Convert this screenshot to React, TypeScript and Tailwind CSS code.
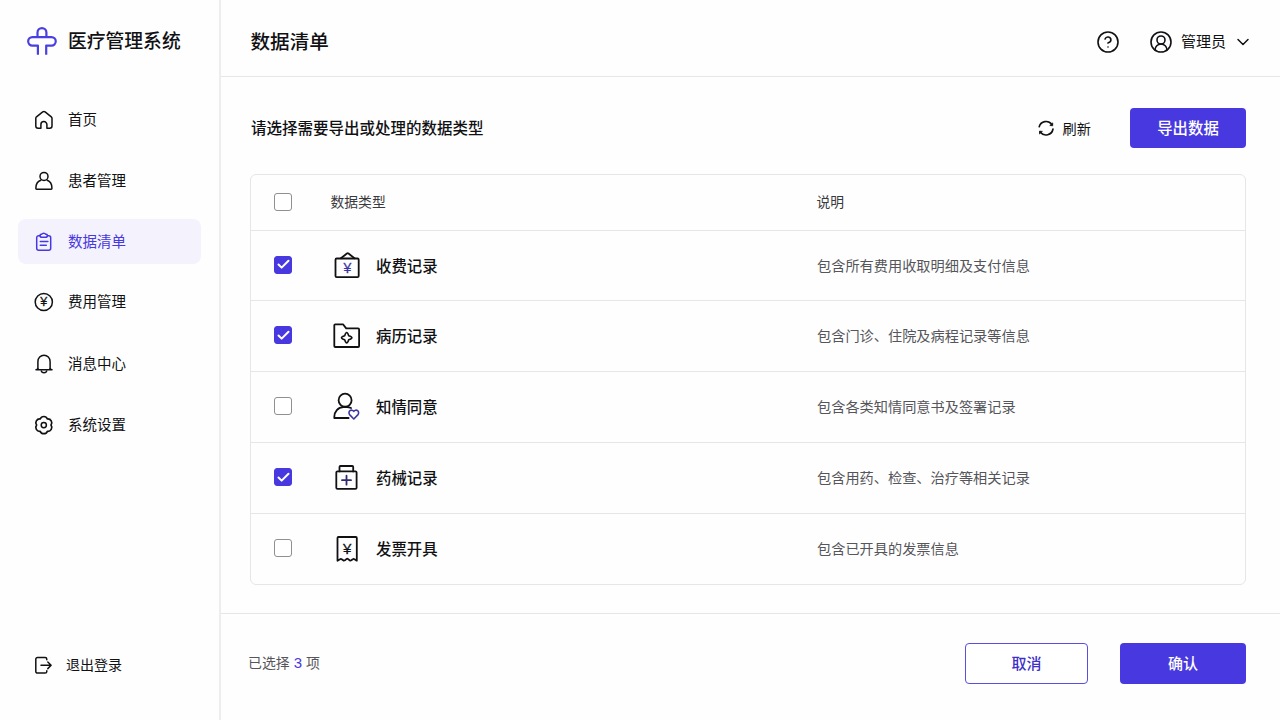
import { useState } from 'react';
import type { ReactNode } from 'react';
import { Check, ChevronDown, CircleUserRound, HelpCircle } from 'lucide-react';
import clsx from 'clsx';

const ACCENT = '#3b35a5';

function Yen({ x, y, size, fill = 'currentColor' }: { x: number; y: number; size: number; fill?: string }) {
  return (
    <text
      x={x}
      y={y}
      fontSize={size}
      fill={fill}
      stroke={fill}
      strokeWidth="0.3"
      textAnchor="middle"
      className="font-['Liberation_Sans',sans-serif]"
    >
      ¥
    </text>
  );
}

function NavIcon({ children }: { children: ReactNode }) {
  return (
    <svg
      className="w-5 h-5 shrink-0"
      viewBox="0 0 20 20"
      fill="none"
      stroke="currentColor"
      strokeWidth="1.5"
      strokeLinecap="round"
      strokeLinejoin="round"
    >
      {children}
    </svg>
  );
}

function RowIcon({ children }: { children: ReactNode }) {
  return (
    <svg
      className="w-8 h-8 shrink-0"
      viewBox="0 0 32 32"
      fill="none"
      stroke="currentColor"
      strokeWidth="1.8"
      strokeLinecap="round"
      strokeLinejoin="round"
    >
      {children}
    </svg>
  );
}

function Logo() {
  return (
    <svg className="w-[30px] h-[30px]" viewBox="0 0 30 30" fill="none" stroke="#4a3fe0" strokeWidth="2.2" strokeLinejoin="round">
      <path d="M10.5 12V7.5a4.4 4.4 0 0 1 8.9 0V12" />
      <path d="M10.9 29.7v-9.1H5.4a4.2 4.2 0 0 1 0-8.5h19.1a4.2 4.2 0 0 1 0 8.5h-5.3v9.1" />
    </svg>
  );
}

const navItems = [
  {
    label: '首页',
    icon: (
      <NavIcon>
        <path d="M6.9 18.2H4A2.2 2.2 0 0 1 1.8 16V8.3c0-.6.3-1.1.7-1.5l6.2-4.9a1.9 1.9 0 0 1 2.4 0l6.2 4.9c.5.4.7.9.7 1.5V16a2.2 2.2 0 0 1-2.2 2.2h-2.9v-3.6a3 3 0 0 0-6 0z" />
      </NavIcon>
    ),
  },
  {
    label: '患者管理',
    icon: (
      <NavIcon>
        <circle cx="10" cy="5.4" r="4" />
        <path d="M6.8 9.2c-2.9 1.1-4.9 4-4.9 7.6v.8c0 .4.3.7.7.7h14.6c.4 0 .7-.3.7-.7v-.8c0-3.6-1.9-6.5-4.7-7.6" />
      </NavIcon>
    ),
  },
  {
    label: '数据清单',
    icon: (
      <NavIcon>
        <path d="M6 3.7H4.7a2 2 0 0 0-2 2v10.6a2 2 0 0 0 2 2h10a2 2 0 0 0 2-2V5.7a2 2 0 0 0-2-2h-1.3" />
        <path d="M6 3.4c0-.7.4-1.1 1.1-1.1h.6c.3-.7 1.1-1.1 2-1.1s1.7.4 2 1.1h.6c.7 0 1.1.4 1.1 1.1 0 1.2-.8 1.9-2 1.9H8c-1.2 0-2-.7-2-1.9z" />
        <path d="M6.3 9.5h7.6M6.3 13.3h6" />
      </NavIcon>
    ),
  },
  {
    label: '费用管理',
    icon: (
      <NavIcon>
        <circle cx="9.8" cy="10" r="8.6" />
        <Yen x={9.8} y={14.2} size={12.5} />
      </NavIcon>
    ),
  },
  {
    label: '消息中心',
    icon: (
      <NavIcon>
        <path d="M3.9 15.3V7.5a6.1 6.3 0 0 1 12.2 0v7.8" />
        <path d="M2 15.7c.9-.1 1.6-.5 1.9-1.1M18 15.7c-.9-.1-1.6-.5-1.9-1.1M2 15.7h16" />
        <path d="M7.3 17c.3 1 1.4 1.7 2.7 1.7s2.4-.7 2.7-1.7" />
      </NavIcon>
    ),
  },
  {
    label: '系统设置',
    icon: (
      <NavIcon>
        <path
          strokeWidth="1.7"
          d="M17 10.1A3.9 3.9 0 0 1 13.4 16.3A3.9 3.9 0 0 1 6.2 16.3A3.9 3.9 0 0 1 2.6 10.1A3.9 3.9 0 0 1 6.2 3.9A3.9 3.9 0 0 1 13.4 3.9A3.9 3.9 0 0 1 17 10.1z"
        />
        <circle cx="9.8" cy="10.1" r="2.6" />
      </NavIcon>
    ),
  },
];

const records = [
  {
    name: '收费记录',
    desc: '包含所有费用收取明细及支付信息',
    icon: (
      <RowIcon>
        <rect x="4.5" y="8.5" width="23.2" height="18.6" rx="1.2" />
        <path d="M9.9 8.3l6-4.8c.5-.4 1.1-.4 1.6 0l6 4.8" />
        <Yen x={16.5} y={22.6} size={14} fill={ACCENT} />
      </RowIcon>
    ),
  },
  {
    name: '病历记录',
    desc: '包含门诊、住院及病程记录等信息',
    icon: (
      <RowIcon>
        <path d="M3.3 5.3c0-.6.4-1 1-1H12l3.2 4.1h11.9c.6 0 1 .4 1 1V26c0 .6-.4 1-1 1H4.3c-.6 0-1-.4-1-1z" />
        <path
          strokeWidth="1.6"
          d="M13.7 15.7q1-3.2 2-3.2t2 3.2q3.2 1 3.2 2t-3.2 2q-1 3.2-2 3.2t-2-3.2q-3.2-1-3.2-2t3.2-2z"
        />
      </RowIcon>
    ),
  },
  {
    name: '知情同意',
    desc: '包含各类知情同意书及签署记录',
    icon: (
      <RowIcon>
        <circle cx="14.1" cy="9.2" r="6.5" />
        <path d="M17.6 27H3.3v-1.2c0-5 3.7-9.7 9-9.7h3.7c1.600 0 2.900.3 4 .9" />
        <path
          stroke={ACCENT}
          strokeWidth="1.6"
          d="M22.800 28l-4-4.100c-1.200-1.300-1-3.300.2-4.200 1.200-.9 2.800-.7 3.800.7 1-1.400 2.600-1.600 3.800-.7 1.200.9 1.400 2.900.2 4.200z"
        />
      </RowIcon>
    ),
  },
  {
    name: '药械记录',
    desc: '包含用药、检查、治疗等相关记录',
    icon: (
      <RowIcon>
        <rect x="5.3" y="9.4" width="20.3" height="17.5" rx="1.2" />
        <path d="M8.5 9.4V5c0-.6.4-1 1-1h11.7c.6 0 1 .4 1 1v4.4" />
        <path stroke="#2f2c72" d="M15.5 13.7v9M11 18.2h9" />
      </RowIcon>
    ),
  },
  {
    name: '发票开具',
    desc: '包含已开具的发票信息',
    icon: (
      <RowIcon>
        <path d="M6.5 27.7V4.9c0-.5.4-.9.9-.9h17.5c.5 0 .9.4.9.9v22.8l-2.3-1.5c-.6-.4-1.2-.4-1.7 0l-1.5 1.1c-.6.4-1.2.4-1.7 0l-1.5-1.2c-.6-.4-1.2-.4-1.7 0l-1.5 1.2c-.6.4-1.2.4-1.7 0l-1.5-1.1c-.6-.4-1.2-.4-1.7 0z" />
        <Yen x={16.2} y={20.9} size={15} />
      </RowIcon>
    ),
  },
];

function Checkbox({ checked, onClick }: { checked: boolean; onClick: () => void }) {
  return (
    <button
      role="checkbox"
      aria-checked={checked}
      onClick={onClick}
      className={clsx(
        'flex items-center justify-center w-[18px] h-[18px] shrink-0 rounded-[3px] border mb-0.5',
        checked ? 'bg-[#4838df] border-[#4838df]' : 'bg-white border-[#8f8f94]'
      )}
    >
      {checked && <Check className="w-[15px] h-[15px] shrink-0 text-white" strokeWidth={3.2} />}
    </button>
  );
}

export default function App() {
  const [active, setActive] = useState('数据清单');
  const [selected, setSelected] = useState(['收费记录', '病历记录', '药械记录']);

  const toggle = (name: string) =>
    setSelected((prev) => (prev.includes(name) ? prev.filter((n) => n !== name) : [...prev, name]));
  const allSelected = selected.length === records.length;

  return (
    <div className="flex w-full h-screen overflow-hidden bg-[#fefefe] text-[#111114] font-['Noto_Sans_CJK_SC',sans-serif]">
      {/* Sidebar */}
      <aside className="flex flex-col w-[221px] shrink-0 border-r-2 border-[#ededef]">
        <div className="flex items-center gap-[11px] pl-[27px] pt-[25px]">
          <Logo />
          <span className="text-[18.8px] leading-[30px] font-medium">医疗管理系统</span>
        </div>

        <nav className="flex flex-col gap-4 px-[18px] mt-[42px]">
          {navItems.map((item) => (
            <button
              key={item.label}
              onClick={() => setActive(item.label)}
              className={clsx(
                'flex items-center gap-3.5 h-[45px] pl-4 rounded-lg text-[14.5px] nth-4:-mt-px nth-4:mb-px',
                active === item.label && 'bg-[#f4f2fd] text-[#4838df]'
              )}
            >
              {item.icon}
              <span className="mb-0.5">{item.label}</span>
            </button>
          ))}
        </nav>

        <button className="flex items-center gap-3 mt-auto mb-[45px] pl-[34px] text-[14px]">
          <NavIcon>
            <path d="M12.8 4.8v-.6a1.7 1.7 0 0 0-1.7-1.7H3.5a1.7 1.7 0 0 0-1.7 1.7v12.2a1.7 1.7 0 0 0 1.7 1.7h7.6a1.7 1.7 0 0 0 1.7-1.7v-.6" />
            <path d="M7 10.3h10M13.8 7l3.3 3.3-3.3 3.3" />
          </NavIcon>
          <span>退出登录</span>
        </button>
      </aside>

      <div className="flex flex-col flex-1 min-w-0">
        {/* Header */}
        <header className="flex items-center justify-between h-[77px] pt-3 pb-[5px] pl-[29.5px] pr-[27px] border-b border-[#e6e6e8]">
          <h1 className="text-[19.6px] leading-[30px] font-medium mb-px">数据清单</h1>
          <div className="flex items-center">
            <HelpCircle className="w-6 h-6" strokeWidth={1.6} />
            <button className="flex items-center ml-[29px] text-[15px] leading-6">
              <CircleUserRound className="w-6 h-6" strokeWidth={1.6} />
              <span className="ml-2 mb-px">管理员</span>
              <ChevronDown className="w-5 h-5 ml-[7px]" strokeWidth={1.8} />
            </button>
          </div>
        </header>

        {/* Content */}
        <main className="flex-1 pl-[29px] pr-[34px] pt-[31px]">
          <div className="flex items-center justify-between h-10">
            <p className="pl-px text-[15.5px] font-medium">请选择需要导出或处理的数据类型</p>
            <div className="flex items-center">
              <button className="flex items-center gap-2 pt-px text-[14.2px]">
                <svg
                  className="w-[18px] h-[18px]"
                  viewBox="0 0 18 18"
                  fill="none"
                  stroke="currentColor"
                  strokeWidth="1.6"
                  strokeLinecap="round"
                  strokeLinejoin="round"
                >
                  <path d="M2.2 7.7A7.1 7.1 0 0 1 14.8 5.500M16 10A7.1 7.1 0 0 1 3.4 13.200" />
                  <path fill="currentColor" strokeWidth="0.8" d="M15.7 4.300v2.500l-2.500-.3zM2.500 14.600v-2.500l2.500.3z" />
                </svg>
                <span>刷新</span>
              </button>
              <button className="w-[116px] h-10 ml-[39px] rounded-[4px] bg-[#4838df] text-white text-[15.4px] font-medium">
                导出数据
              </button>
            </div>
          </div>

          <div className="mt-[26px] border border-[#e6e6e8] rounded-md">
            <div className="flex items-center h-[55px] pl-[23px] text-[13.8px] text-[#3a3a3e]">
              <Checkbox
                checked={allSelected}
                onClick={() => setSelected(allSelected ? [] : records.map((r) => r.name))}
              />
              <span className="w-[486px] ml-[38.5px] mb-0.5">数据类型</span>
              <span className="mb-0.5">说明</span>
            </div>
            {records.map((record) => (
              <div key={record.name} className="flex items-center h-[71px] nth-2:h-[70px] pl-[23px] border-t border-[#e6e6e8]">
                <Checkbox checked={selected.includes(record.name)} onClick={() => toggle(record.name)} />
                <div className="flex items-center gap-[13px] w-[486px] ml-[39px]">
                  {record.icon}
                  <span className="text-[15.4px] font-medium">{record.name}</span>
                </div>
                <span className="text-[14.2px] text-[#55555a]">{record.desc}</span>
              </div>
            ))}
          </div>
        </main>

        {/* Footer */}
        <footer className="flex items-center justify-between h-[107px] pl-[27px] pr-[34px] pb-2 border-t border-[#e6e6e8]">
          <p className="text-[13.9px] text-[#55555a]">
            已选择
            <span className="mx-1 text-[15px] text-[#4838df] font-['Liberation_Sans',sans-serif]">{selected.length}</span>项
          </p>
          <div className="flex gap-8 pt-px">
            <button className="w-[123px] h-[41px] rounded-[4px] border border-[#5a4ee0] bg-white text-[#4030c8] text-[15px] font-medium">
              取消
            </button>
            <button className="w-[126px] h-[41px] rounded-[4px] bg-[#4838df] text-white text-[15px] font-medium">
              确认
            </button>
          </div>
        </footer>
      </div>
    </div>
  );
}
